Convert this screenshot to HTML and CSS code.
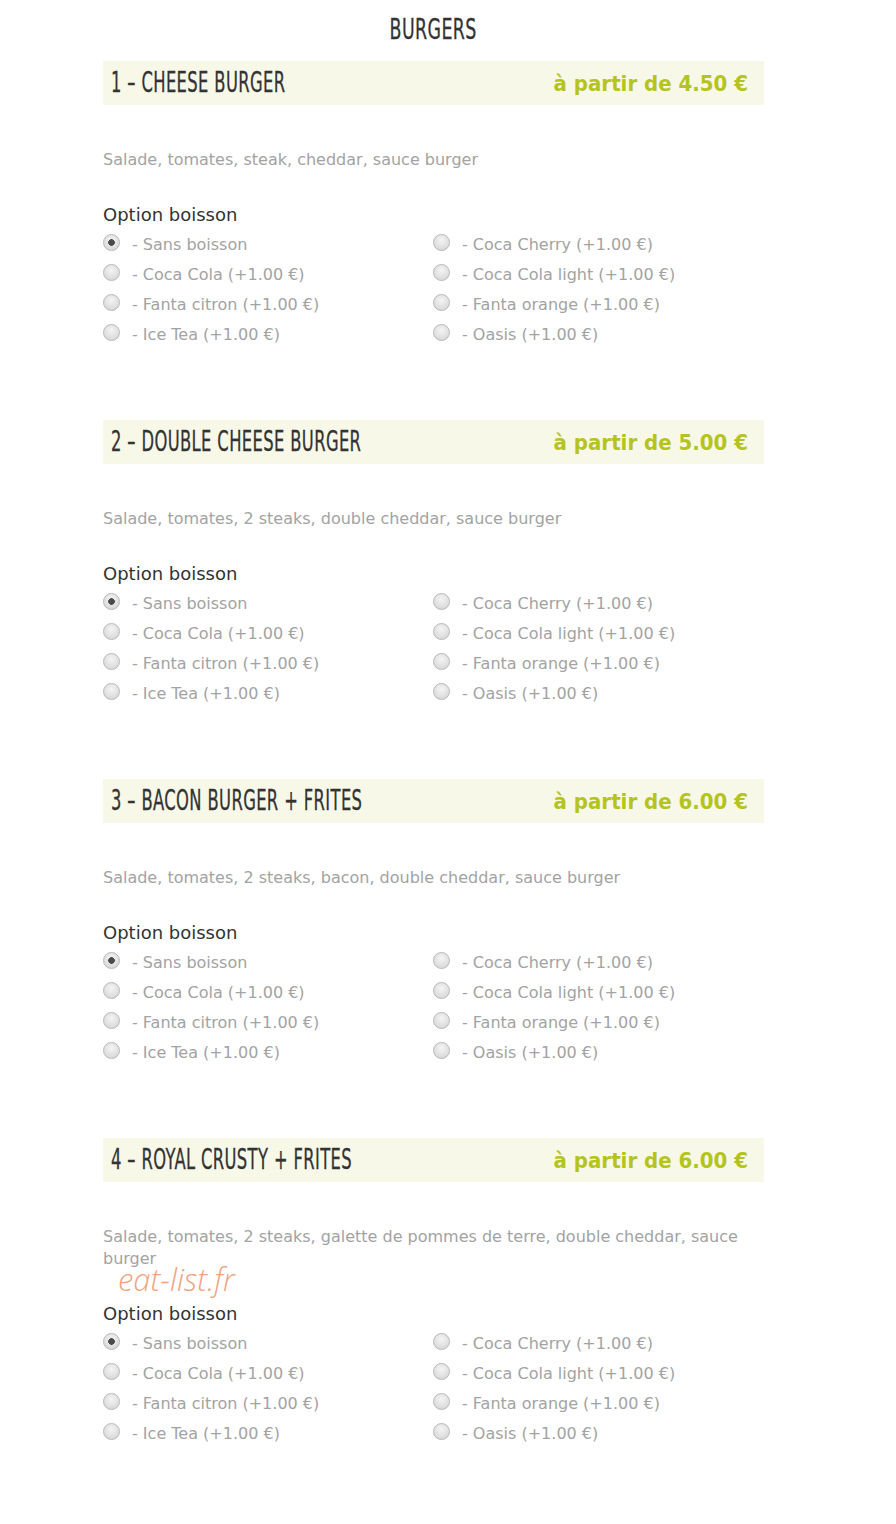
FILE: index.html
```html
<!DOCTYPE html>
<html lang="fr">
<head>
<meta charset="utf-8">
<title>Burgers</title>
<link rel="stylesheet" href="styles.css">
</head>
<body>
<main class="menu">
  <h1 class="menu-title"><span>BURGERS</span></h1>

  <section class="product">
    <header class="product-head">
      <h2 class="product-name"><span>1 – CHEESE BURGER</span></h2>
      <div class="product-price">à partir de 4.50 €</div>
    </header>
    <p class="product-desc">Salade, tomates, steak, cheddar, sauce burger</p>
    <div class="option-title">Option boisson</div>
    <div class="options">
      <label class="opt"><input type="radio" name="b1" checked><span>- Sans boisson</span></label>
      <label class="opt"><input type="radio" name="b1"><span>- Coca Cherry (+1.00 €)</span></label>
      <label class="opt"><input type="radio" name="b1"><span>- Coca Cola (+1.00 €)</span></label>
      <label class="opt"><input type="radio" name="b1"><span>- Coca Cola light (+1.00 €)</span></label>
      <label class="opt"><input type="radio" name="b1"><span>- Fanta citron (+1.00 €)</span></label>
      <label class="opt"><input type="radio" name="b1"><span>- Fanta orange (+1.00 €)</span></label>
      <label class="opt"><input type="radio" name="b1"><span>- Ice Tea (+1.00 €)</span></label>
      <label class="opt"><input type="radio" name="b1"><span>- Oasis (+1.00 €)</span></label>
    </div>
  </section>

  <section class="product">
    <header class="product-head">
      <h2 class="product-name"><span>2 – DOUBLE CHEESE BURGER</span></h2>
      <div class="product-price">à partir de 5.00 €</div>
    </header>
    <p class="product-desc">Salade, tomates, 2 steaks, double cheddar, sauce burger</p>
    <div class="option-title">Option boisson</div>
    <div class="options">
      <label class="opt"><input type="radio" name="b2" checked><span>- Sans boisson</span></label>
      <label class="opt"><input type="radio" name="b2"><span>- Coca Cherry (+1.00 €)</span></label>
      <label class="opt"><input type="radio" name="b2"><span>- Coca Cola (+1.00 €)</span></label>
      <label class="opt"><input type="radio" name="b2"><span>- Coca Cola light (+1.00 €)</span></label>
      <label class="opt"><input type="radio" name="b2"><span>- Fanta citron (+1.00 €)</span></label>
      <label class="opt"><input type="radio" name="b2"><span>- Fanta orange (+1.00 €)</span></label>
      <label class="opt"><input type="radio" name="b2"><span>- Ice Tea (+1.00 €)</span></label>
      <label class="opt"><input type="radio" name="b2"><span>- Oasis (+1.00 €)</span></label>
    </div>
  </section>

  <section class="product">
    <header class="product-head">
      <h2 class="product-name"><span>3 – BACON BURGER + FRITES</span></h2>
      <div class="product-price">à partir de 6.00 €</div>
    </header>
    <p class="product-desc">Salade, tomates, 2 steaks, bacon, double cheddar, sauce burger</p>
    <div class="option-title">Option boisson</div>
    <div class="options">
      <label class="opt"><input type="radio" name="b3" checked><span>- Sans boisson</span></label>
      <label class="opt"><input type="radio" name="b3"><span>- Coca Cherry (+1.00 €)</span></label>
      <label class="opt"><input type="radio" name="b3"><span>- Coca Cola (+1.00 €)</span></label>
      <label class="opt"><input type="radio" name="b3"><span>- Coca Cola light (+1.00 €)</span></label>
      <label class="opt"><input type="radio" name="b3"><span>- Fanta citron (+1.00 €)</span></label>
      <label class="opt"><input type="radio" name="b3"><span>- Fanta orange (+1.00 €)</span></label>
      <label class="opt"><input type="radio" name="b3"><span>- Ice Tea (+1.00 €)</span></label>
      <label class="opt"><input type="radio" name="b3"><span>- Oasis (+1.00 €)</span></label>
    </div>
  </section>

  <section class="product">
    <header class="product-head">
      <h2 class="product-name"><span>4 – ROYAL CRUSTY + FRITES</span></h2>
      <div class="product-price">à partir de 6.00 €</div>
    </header>
    <p class="product-desc">Salade, tomates, 2 steaks, galette de pommes de terre, double cheddar, sauce burger</p>
    <div class="watermark">eat-list.fr</div>
    <div class="option-title">Option boisson</div>
    <div class="options">
      <label class="opt"><input type="radio" name="b4" checked><span>- Sans boisson</span></label>
      <label class="opt"><input type="radio" name="b4"><span>- Coca Cherry (+1.00 €)</span></label>
      <label class="opt"><input type="radio" name="b4"><span>- Coca Cola (+1.00 €)</span></label>
      <label class="opt"><input type="radio" name="b4"><span>- Coca Cola light (+1.00 €)</span></label>
      <label class="opt"><input type="radio" name="b4"><span>- Fanta citron (+1.00 €)</span></label>
      <label class="opt"><input type="radio" name="b4"><span>- Fanta orange (+1.00 €)</span></label>
      <label class="opt"><input type="radio" name="b4"><span>- Ice Tea (+1.00 €)</span></label>
      <label class="opt"><input type="radio" name="b4"><span>- Oasis (+1.00 €)</span></label>
    </div>
  </section>
</main>
</body>
</html>
```

FILE: styles.css
```css
html, body {
  margin: 0;
  padding: 0;
  background: #ffffff;
}

body {
  font-family: "DejaVu Sans", sans-serif;
  color: #333333;
}

.menu {
  width: 661px;
  margin: 0 0 0 103px;
  padding: 14px 0 40px;
}

/* condensed display face for titles */
.menu-title,
.product-name {
  font-family: "Liberation Sans Narrow", "DejaVu Sans Condensed", sans-serif;
  font-weight: normal;
  color: #333333;
  margin: 0;
  letter-spacing: 0.6px;
  -webkit-text-stroke: 0.3px #333333;
}

.menu-title {
  text-align: center;
  font-size: 28px;
  line-height: 32px;
  height: 32px;
  margin: 0 0 15px;
}

.menu-title span,
.product-name span {
  display: inline-block;
  transform: scaleX(0.69);
  transform-origin: center;
}

.product-name span {
  transform: scaleX(0.648);
  transform-origin: left center;
}

.product {
  position: relative;
  margin-bottom: 71px;
}

.product-head {
  display: flex;
  align-items: center;
  justify-content: space-between;
  height: 44px;
  padding: 0 16px 0 8px;
  background: #f7f8e7;
}

.product-name {
  font-size: 28px;
  line-height: 44px;
  white-space: nowrap;
}

.product-price {
  font-family: "DejaVu Sans Condensed", "DejaVu Sans", sans-serif;
  font-weight: bold;
  font-size: 22px;
  color: #b4c41d;
}

.product-desc {
  margin: 44px 0 33px;
  font-size: 16px;
  line-height: 22px;
  color: #a3a3a3;
}

.option-title {
  font-size: 18px;
  line-height: 22px;
  color: #333333;
  margin-bottom: 3px;
}

.options {
  display: grid;
  grid-template-columns: 330px 1fr;
}

.opt {
  display: flex;
  align-items: center;
  height: 30px;
  font-size: 16px;
  color: #a3a3a3;
}

.opt input {
  appearance: none;
  -webkit-appearance: none;
  width: 17px;
  height: 17px;
  margin: 0 12px 0 0;
  border: 1px solid #b8b8b8;
  border-radius: 50%;
  background: radial-gradient(circle at 50% 35%, #f4f4f4 0%, #dcdcdc 70%, #cfcfcf 100%);
  position: relative;
  top: -2px;
}

.opt input:checked {
  background:
    radial-gradient(circle, #4a4a4a 0 3px, transparent 3.6px),
    radial-gradient(circle at 50% 35%, #f4f4f4 0%, #dcdcdc 70%, #cfcfcf 100%);
}

.watermark {
  position: absolute;
  left: 15px;
  top: 121px;
  font-family: "Open Sans", sans-serif;
  font-style: italic;
  font-weight: 300;
  font-size: 31px;
  line-height: 40px;
  color: #f0a47e;
}
```
